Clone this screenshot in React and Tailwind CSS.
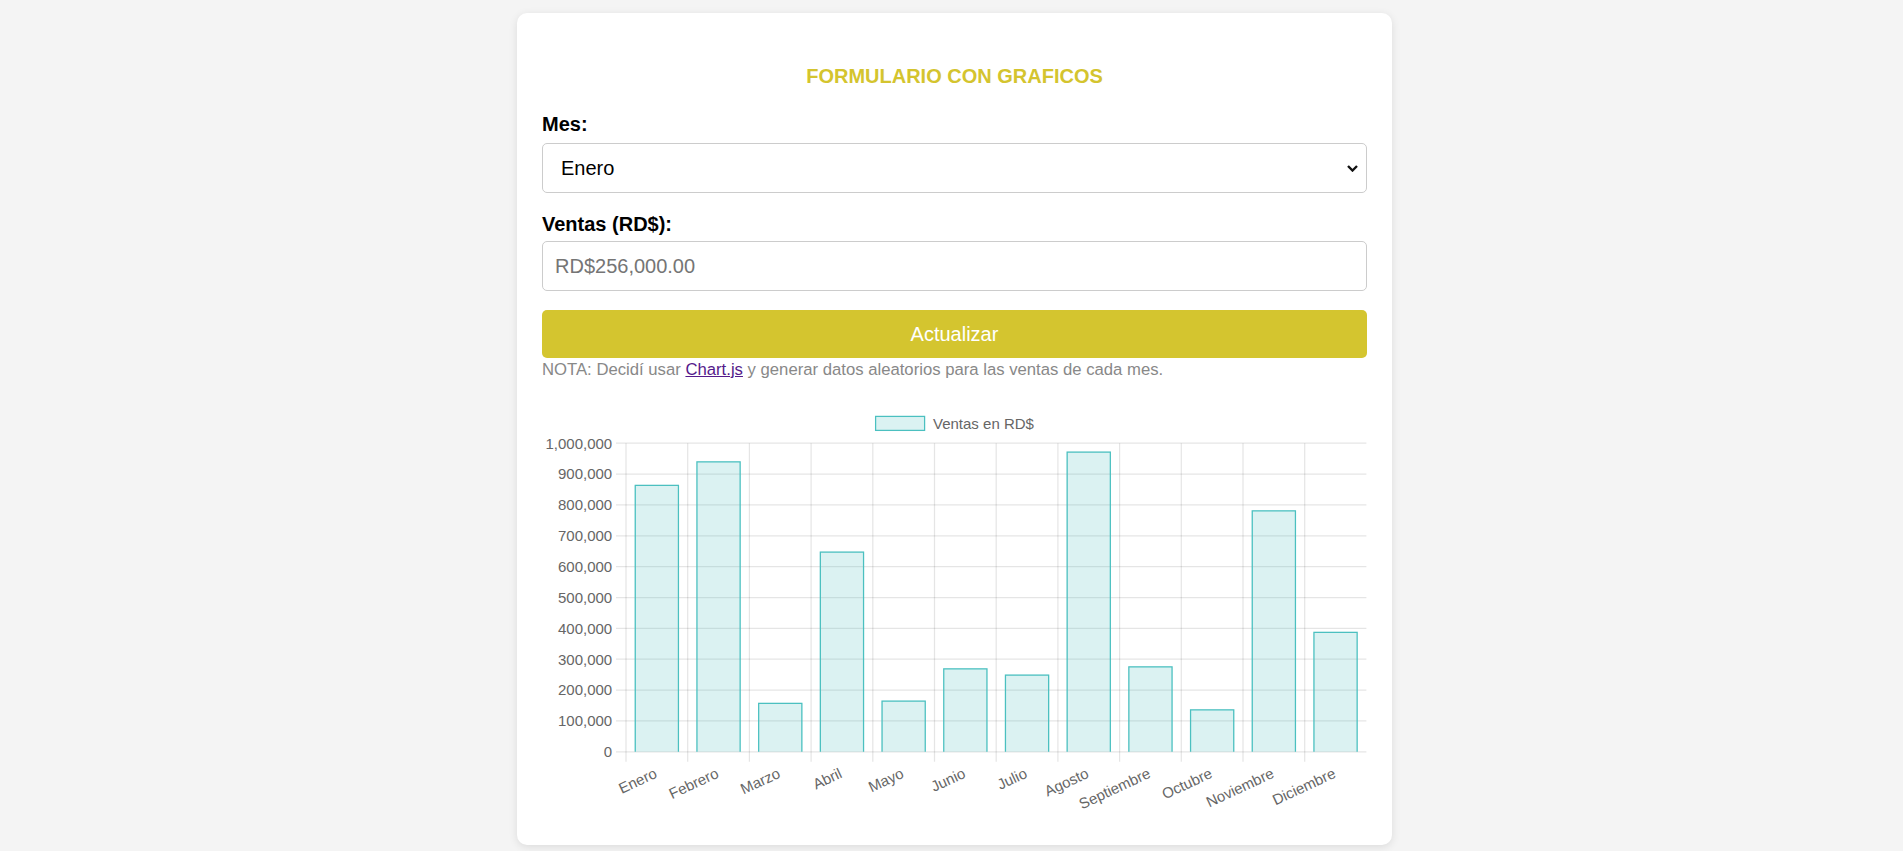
import { useState } from "react";

const meses = [
  "Enero",
  "Febrero",
  "Marzo",
  "Abril",
  "Mayo",
  "Junio",
  "Julio",
  "Agosto",
  "Septiembre",
  "Octubre",
  "Noviembre",
  "Diciembre",
];

const ventas = [
  865000, 941600, 158800, 649000, 166000, 271000, 250500, 973000, 277000,
  138000, 783000, 389000,
];

// chart geometry (canvas 825 x 412.5)
const left = 84;
const right = 824.4;
const top = 40.2;
const bottom = 348.8;
const cw = (right - left) / 12;
const yOf = (v) => bottom - (v / 1000000) * (bottom - top);

function BarChart({ data }) {
  const ticks = [];
  for (let v = 0; v <= 1000000; v += 100000) ticks.push(v);

  return (
    <svg
      width="825"
      height="412.5"
      viewBox="0 0 825 412.5"
      className="block"
      fontFamily="Liberation Sans, Arial, sans-serif"
      fontSize="15"
    >
      {/* legend */}
      <rect
        x="333.6"
        y="13.4"
        width="49"
        height="14"
        fill="rgba(75,192,192,0.2)"
        stroke="rgb(75,192,192)"
        strokeWidth="1.25"
      />
      <text x="391" y="25.8" fill="#666">
        Ventas en RD$
      </text>

      {/* horizontal grid + y ticks */}
      {ticks.map((v) => (
        <g key={v}>
          <line
            x1="74"
            x2={right}
            y1={yOf(v)}
            y2={yOf(v)}
            stroke="rgba(0,0,0,0.1)"
            strokeWidth="1.25"
          />
          <text x="70.2" y={yOf(v) + 5.4} textAnchor="end" fill="#666">
            {v.toLocaleString("en-US")}
          </text>
        </g>
      ))}

      {/* vertical grid */}
      {meses.map((m, i) => (
        <line
          key={m}
          x1={left + i * cw}
          x2={left + i * cw}
          y1={top}
          y2={bottom + 10}
          stroke="rgba(0,0,0,0.1)"
          strokeWidth="1.25"
        />
      ))}

      {/* bars */}
      {data.map((v, i) => {
        const cx = left + (i + 0.5) * cw;
        const w = cw * 0.72;
        const x0 = cx - w / 2;
        const y0 = yOf(v);
        const s = 0.625;
        return (
          <g key={i}>
            <rect
              x={x0}
              y={y0}
              width={w}
              height={bottom - y0}
              fill="rgba(75,192,192,0.2)"
            />
            <path
              d={`M${x0 + s} ${bottom} V${y0 + s} H${x0 + w - s} V${bottom}`}
              fill="none"
              stroke="rgb(75,192,192)"
              strokeWidth="1.25"
            />
          </g>
        );
      })}

      {/* x labels */}
      {meses.map((m, i) => (
        <text
          key={m}
          transform={`translate(${left + (i + 0.5) * cw - 3.5} 364) rotate(-25)`}
          y="11"
          textAnchor="end"
          fill="#666"
        >
          {m}
        </text>
      ))}
    </svg>
  );
}

export default function App() {
  const [mes, setMes] = useState("Enero");
  const [monto, setMonto] = useState("");

  return (
    <div className="min-h-screen bg-[#f4f4f4] font-['Liberation_Sans',Arial,sans-serif] flex justify-center pl-[6px] pt-[13px] pb-[6px]">
      <div className="w-[875px] bg-white rounded-[10px] shadow-[0_2px_8px_rgba(0,0,0,0.1)] px-[25px] pt-[51.5px] pb-[28px]">
        <h2 className="text-center text-[20px] leading-[23px] font-bold text-[#d4c42e]">
          FORMULARIO CON GRAFICOS
        </h2>

        <label className="block mt-[25px] text-[20px] leading-[23px] font-bold text-black">
          Mes:
        </label>
        <div className="relative mt-[7px]">
          <select
            value={mes}
            onChange={(e) => setMes(e.target.value)}
            className="block w-full h-[50px] pl-[18px] pr-[40px] text-[20px] text-black bg-white border border-[#ccc] rounded-[5px] appearance-none outline-none"
          >
            {meses.map((m) => (
              <option key={m}>{m}</option>
            ))}
          </select>
          <svg
            width="11"
            height="7"
            viewBox="0 0 11 7"
            className="absolute right-[9px] top-[22px] pointer-events-none"
          >
            <path
              d="M1 1 L5.5 5.5 L10 1"
              fill="none"
              stroke="#111"
              strokeWidth="2.4"
            />
          </svg>
        </div>

        <label className="block mt-[20px] text-[20px] leading-[23px] font-bold text-black">
          Ventas (RD$):
        </label>
        <input
          type="text"
          value={monto}
          onChange={(e) => setMonto(e.target.value)}
          placeholder="RD$256,000.00"
          className="block w-full h-[50px] mt-[5.5px] px-[12px] text-[20px] text-black border border-[#ccc] rounded-[5px] placeholder:text-[#757575] outline-none"
        />

        <button className="block w-full h-[47.5px] mt-[19px] bg-[#d4c52f] text-white text-[20px] rounded-[5px]">
          Actualizar
        </button>

        <p className="mt-[2px] text-[16.7px] leading-[19px] text-[#888]">
          NOTA: Decidí usar{" "}
          <a href="#" className="text-[#551a8b] underline">
            Chart.js
          </a>{" "}
          y generar datos aleatorios para las ventas de cada mes.
        </p>

        <div className="mt-[24px]">
          <BarChart data={ventas} />
        </div>
      </div>
    </div>
  );
}
